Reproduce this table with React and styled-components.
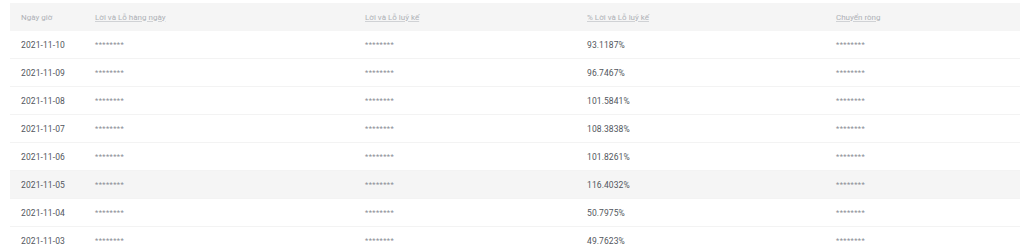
import React from "react";
import styled, { createGlobalStyle } from "styled-components";

const GlobalStyle = createGlobalStyle`
  body {
    margin: 0;
    background: #ffffff;
    font-family: Roboto, "Noto Sans", sans-serif;
  }
`;

const cols = "74px 270px 222px 249px 1fr";

export const Wrapper = styled.div`
  padding: 3px 0 0 10px;
  width: 1010px;
`;

export const HeadRow = styled.div`
  display: grid;
  grid-template-columns: ${cols};
  align-items: center;
  height: 28px;
  background-color: #f5f5f5;
`;

export const HeadCell = styled.div`
  padding-left: 11px;
  font-size: 8px;
  color: #aeb1b5;
  white-space: nowrap;
`;

export const HeadLabel = styled.span`
  text-decoration: ${(p) => (p.$plain ? "none" : "underline")};
  text-decoration-color: #d0d2d5;
  text-underline-offset: 1px;
`;

export const Row = styled.div`
  display: grid;
  grid-template-columns: ${cols};
  align-items: center;
  height: 28px;
  box-sizing: border-box;
  border-bottom: 1px solid #f3f3f3;
  background-color: ${(p) => (p.$active ? "#f5f5f5" : "#ffffff")};
`;

export const Cell = styled.div`
  padding-left: 11px;
  font-size: ${(p) => (p.$muted ? "7.5px" : "8.5px")};
  color: ${(p) => (p.$muted ? "#8a8e94" : "#52565d")};
  letter-spacing: ${(p) => (p.$muted ? "0.4px" : "0.1px")};
  white-space: nowrap;
`;

const rows = [
  ["2021-11-10", "93.1187%"],
  ["2021-11-09", "96.7467%"],
  ["2021-11-08", "101.5841%"],
  ["2021-11-07", "108.3838%"],
  ["2021-11-06", "101.8261%"],
  ["2021-11-05", "116.4032%"],
  ["2021-11-04", "50.7975%"],
  ["2021-11-03", "49.7623%"],
];

const headers = [
  "Ngày giờ",
  "Lời và Lỗ hàng ngày",
  "Lời và Lỗ luỹ kế",
  "% Lời và Lỗ luỹ kế",
  "Chuyển ròng",
];

const App = () => {
  return (
    <Wrapper>
      <GlobalStyle />
      <HeadRow>
        {headers.map((h, i) => (
          <HeadCell key={h}>
            <HeadLabel $plain={i === 0}>{h}</HeadLabel>
          </HeadCell>
        ))}
      </HeadRow>
      {rows.map(([date, pct], key) => (
        <Row key={key} $active={key === 5}>
          <Cell>{date}</Cell>
          <Cell $muted>********</Cell>
          <Cell $muted>********</Cell>
          <Cell>{pct}</Cell>
          <Cell $muted>********</Cell>
        </Row>
      ))}
    </Wrapper>
  );
};

export default App;
